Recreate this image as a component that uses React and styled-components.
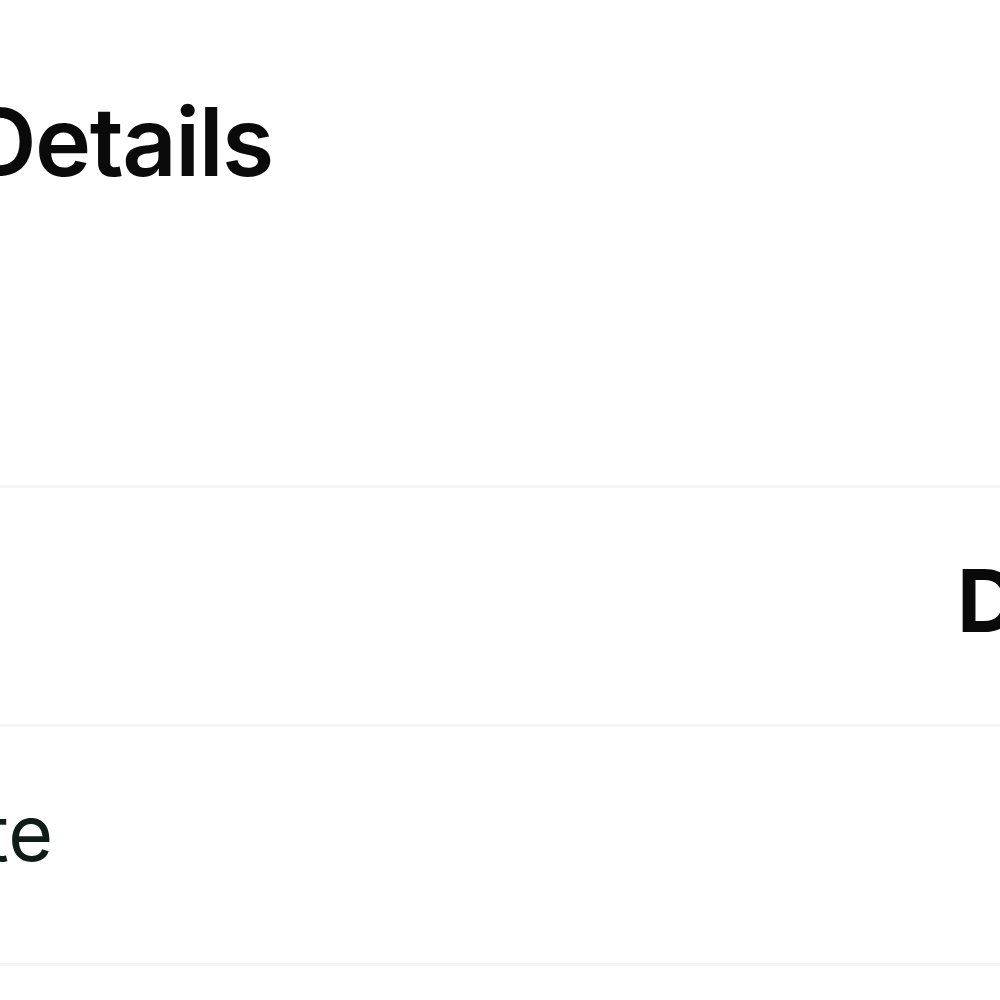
import React from "react";
import styled, { createGlobalStyle } from "styled-components";

const GlobalStyle = createGlobalStyle`
  html, body {
    margin: 0;
    padding: 0;
    background: #ffffff;
    overflow: hidden;
  }
  body {
    font-family: Inter, "Liberation Sans", sans-serif;
    -webkit-font-smoothing: antialiased;
  }
`;

// the screen is shown zoomed in, so the sheet is wider than the window
const Sheet = styled.div`
  width: 1300px;
  margin-left: -115px;
  padding-top: 94px;
  display: flex;
  flex-direction: column;
`;

const Title = styled.h1`
  margin: 0 0 296px 83px;
  font-size: 95px;
  line-height: 1;
  font-weight: 600;
  letter-spacing: -1.5px;
  color: #0a0a0a;
`;

const List = styled.div`
  display: flex;
  flex-direction: column;
`;

const Row = styled.div`
  display: grid;
  grid-template-columns: 1072px 1fr;
  align-items: center;
  height: 236px;
  border-top: 3px solid #f5f5f5;
  &:last-child {
    border-bottom: 3px solid #f5f5f5;
  }
`;

const Label = styled.span`
  font-size: 77px;
  line-height: 1;
  font-weight: 400;
  color: #0f1c17;
  margin-bottom: 24px;
  white-space: nowrap;
`;

const Value = styled.span`
  font-size: 86px;
  line-height: 1;
  font-weight: 700;
  color: #0a0a0a;
  margin-bottom: 10px;
  white-space: nowrap;
`;

const rows = [
  { label: "ID", value: "Delivered" },
  { label: "Date", value: "" },
];

export default function App() {
  return (
    <>
      <GlobalStyle />
      <Sheet>
        <Title>Details</Title>
        <List>
          {rows.map((r) => (
            <Row key={r.label}>
              <Label>{r.label}</Label>
              <Value>{r.value}</Value>
            </Row>
          ))}
        </List>
      </Sheet>
    </>
  );
}
